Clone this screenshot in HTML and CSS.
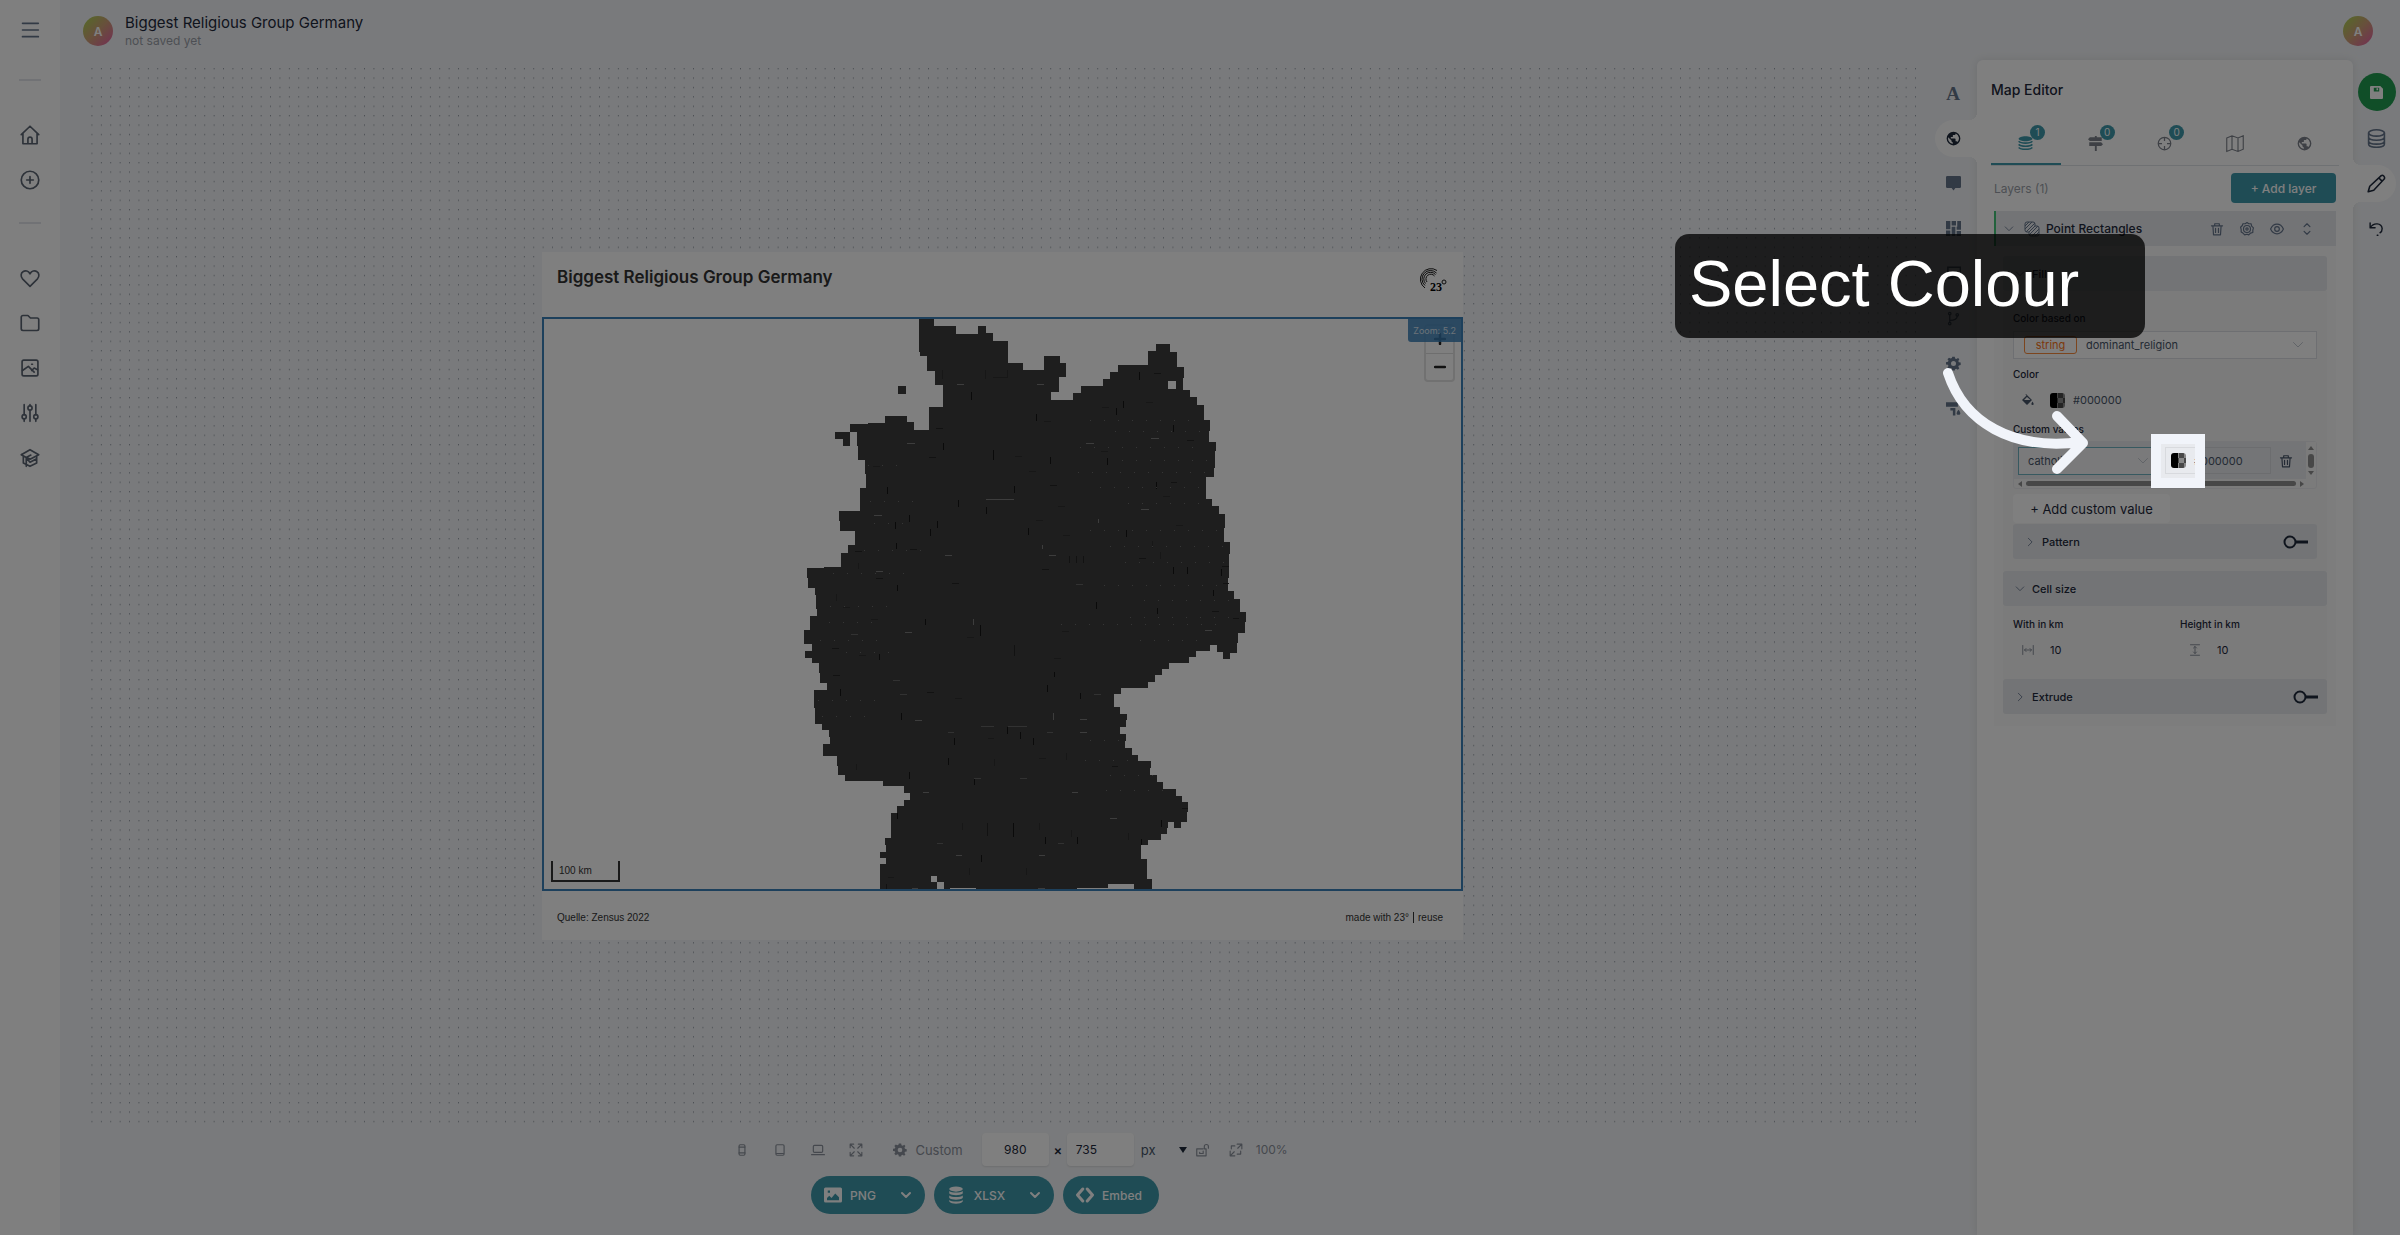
FILE: index.html
```html
<!DOCTYPE html>
<html lang="en">
<head>
  <meta charset="UTF-8" />
  <meta name="viewport" content="width=device-width, initial-scale=1" />
  <title>Biggest Religious Group Germany</title>
  <link rel="stylesheet" href="styles.css">
</head>
<body>
  <!-- Shared icons -->
  <svg class="icon-defs" aria-hidden="true">
    <symbol id="i-globe" viewBox="0 0 24 24"><path fill="currentColor" fill-rule="evenodd" d="M12 1a11 11 0 1 0 0 22 11 11 0 0 0 0-22zM11 20.500c-4.300-.5-7.700-4.200-7.700-8.500 0-.7.100-1.300.2-1.900L8.800 15v1.100c0 1.200 1 2.200 2.200 2.200zm7.500-2.800c-.3-.9-1.100-1.500-2.100-1.500h-1.100v-3.300c0-.6-.5-1.100-1.100-1.100H7.700V9.700h2.200c.6 0 1.100-.5 1.100-1.100V6.400h2.200c1.200 0 2.200-1 2.200-2.200v-.4a8.800 8.800 0 0 1 3.100 13.900z"/></symbol>
    <symbol id="i-gear" viewBox="0 0 24 24"><path fill="currentColor" fill-rule="evenodd" d="M10 1h4l.6 3 2 .9L19.300 3.200l2 2-1.600 2.700.8 2 3 .6v3.900l-3 .6-.8 2 1.600 2.600-2.400 2.300-2.500-1.700-2 .8L14 23h-4l-.6-3-2-.8-2.600 1.700L2.200 18.500 4 16l-.9-2L0 13.700V10l3.200-.7.8-2L2.300 5l2.500-2.400L7.400 4l2-.8zM12 8a4 4 0 1 0 0 8 4 4 0 0 0 0-8z"/></symbol>
    <symbol id="i-trash" viewBox="0 0 24 24"><path d="M2.500 6.500h19M8 6V3h8v3M5 7l1 15h12l1-15M9.500 11v7M14.500 11v7"/></symbol>
    <symbol id="i-down" viewBox="0 0 24 24"><path d="M3 7l9 9 9-9"/></symbol>
    <symbol id="i-right" viewBox="0 0 24 24"><path d="M8 3l9 9-9 9"/></symbol>
    <symbol id="i-drop" viewBox="0 0 24 24"><path d="M4 8l8 8 8-8" stroke-width="4"/></symbol>
    <symbol id="i-toggle" viewBox="0 0 26 14"><circle cx="7" cy="7" r="5.500" fill="none" stroke="currentColor" stroke-width="2"/><path d="M13 7h12" stroke="currentColor" stroke-width="3"/></symbol>
  </svg>

  <div class="app">
    <aside class="sidebar">
      <button class="menu-btn" aria-label="Menu"><svg class="icon" viewBox="0 0 24 24"><path d="M3 4h19M3 12h19M3 20h19"/></svg></button>
      <hr>
      <a href="#" aria-label="Home"><svg class="icon" viewBox="0 0 24 24"><path d="M1.500 11.500L12 1.500l10.500 10M3.500 10v12.500h17V10M9.500 22v-5a2.500 2.500 0 0 1 5 0v5"/></svg></a>
      <a href="#" aria-label="New"><svg class="icon" viewBox="0 0 24 24"><circle cx="12" cy="12" r="10.500"/><path d="M12 8v8M8 12h8"/></svg></a>
      <hr>
      <a href="#" aria-label="Favourites"><svg class="icon" viewBox="0 0 24 24"><path d="M12 22L3 13C.5 10 1 6 3.500 4.500 6.500 2.500 10 3.500 12 7c2-3.500 5.500-4.500 8.500-2.500C23 6 23.500 10 21 13z"/></svg></a>
      <a href="#" aria-label="Folders"><svg class="icon" viewBox="0 0 24 24"><path d="M1.500 19V5a2 2 0 0 1 2-2h6l3 3h8a2 2 0 0 1 2 2v11a2 2 0 0 1-2 2h-17a2 2 0 0 1-2-2z"/></svg></a>
      <a href="#" aria-label="Images"><svg class="icon" viewBox="0 0 24 24"><rect x="2.500" y="2.500" width="19" height="19" rx="2"/><path d="M3 15l7-5 7 7M14 15l3-3 4 2M14 7.500h1"/></svg></a>
      <a href="#" aria-label="Adjustments"><svg class="icon" viewBox="0 0 24 24"><path d="M5 2v12M5 19v3M12 9v13M12 2v1M19 2v12M19 19v3"/><circle cx="5" cy="16.500" r="2.500"/><circle cx="12" cy="6" r="2.500"/><circle cx="19" cy="16.500" r="2.500"/></svg></a>
      <a href="#" aria-label="Academy"><svg class="icon" viewBox="0 0 24 24"><path d="M1.500 8L12 2l10.500 6L12 13.500 8 11l5-2.500M1.500 8l6 3.500V22M4 10v8l8 4 8-4v-8M7.500 12l4.500 5 8-4"/></svg></a>
    </aside>

    <main class="main">
      <header class="topbar">
        <span class="avatar">A</span>
        <div class="doc">
          <h1>Biggest Religious Group Germany</h1>
          <p>not saved yet</p>
        </div>
        <span class="avatar user">A</span>
      </header>

      <div class="workspace">
        <section class="stage">
          <div class="canvas">
            <svg class="dots" aria-hidden="true">
              <defs><pattern id="dot" width="10" height="10" patternUnits="userSpaceOnUse" patternTransform="scale(.94)"><circle cx="9.800" cy="0.800" r=".8" fill="#7f8894"/></pattern></defs>
              <rect width="100%" height="100%" fill="url(#dot)"/>
            </svg>
            <article class="card">
              <div class="card-head">
                <h2>Biggest Religious Group Germany</h2>
                <svg class="logo" viewBox="0 0 30 28" aria-label="23 degrees">
                  <g fill="none" stroke="#1c1c1c" stroke-width="1">
                    <path d="M19 3.500A10.500 10.500 0 1 0 7 21M18.500 6A8.500 8.500 0 1 0 7 18.500M17.500 7.500A6.500 6.500 0 1 0 7.500 16.500M16.500 9A4.500 4.500 0 1 0 9 15"/>
                    <circle cx="26" cy="15" r="2"/>
                  </g>
                  <text x="12" y="24" class="logo-text">23</text>
                </svg>
              </div>
              <div class="map">
                <svg class="land" viewBox="544 319 917 570" aria-label="Map of Germany">
                  <path fill="#3c3c3c" fill-rule="evenodd" d="M919 319H934V326H956V334H978V326H986V333H993V341H1008V363H1023V370H1044V356H1060V363H1066V377H1059V392H1051V400H1073V393H1081V386H1103V379H1110V372H1118V365H1148V351H1156V344H1170V352H1177V367H1184L1183 390H1190V397H1197V405H1204V420H1210L1209 442H1216L1214 477H1206V499H1212V506H1219V514H1225L1224 542H1230L1228 591H1234V599H1240V612H1246L1245 633H1238L1237 653H1230V659H1223V652H1217V645H1210V651H1196V657H1189V663H1169V669H1162V675H1155V682H1148V688H1121V694H1114V707H1120V714H1127L1126 727H1120V734H1126L1125 748H1132V755H1138V761H1151L1150 775H1157V782H1163V789H1176V796H1182V802H1188L1187 822H1181V828H1174V822H1168L1167 834H1161V840H1148V845H1141V859H1147V879H1152V889H1134V884H1108V888H1077V889H976V888H950V889H880V864H886V858H880V852H886L885 838H891V813H897V806H904V800H910V793H904V786H883V781H845V775H838L837 756H823V744H830L829 730H822V724H815L814 690H827V683H820L819 663H812V658H805V651H812V644H804V630H810V616H817L815 588H808L807 568L841 567V553H848V545H855V531H840L839 511H860V488H866L865 460H858L857 432H850V424L885 423V416H907V422H914V430H929V407H943V385H935V371H927V356H920L919 348ZM898 386h8v8h-8ZM835 432h15v14h-7v-7h-8ZM1168 381h8v8h-8ZM931 876h6v6h-6ZM937 882h7v7h-7Z"/>
                  <!-- gaps between grid cells -->
                  <path stroke="#969696" stroke-width="1" opacity=".7" d="M957 384.500h7M907 443.500h8M986 499.500h28M874 515.500h8M945 555.500h7M876 571.500h7M1037 384.500h7M1086 443.500h8M1151 438.500h8M1141 509.500h8M1049 555.500h7M905 632.500h7M1205 630.500h7M915 720.500h7M1080 719.500h7M1080 732.500h7M923 792.500h6M1072 792.500h6M1110 818.500h7M956 855.500h6M1039 855.500h6M912 888.500h6M1038 888.500h7M973.500 619v6M1053.500 713v7M1098.500 519v4M1042.500 545v4"/>
                  <path stroke="#707070" stroke-width="1" opacity=".8" d="M851 634.500h7M893 680.500h7M900 694.500h7M1094 694.500h7M981 726.500h13M1008 726.500h19M948 732.500h6M1047 732.500h6M974 778.500h7M1020 778.500h7M937 843.500h6M1058 843.500h6M1076 584.500h7"/>
                  <path stroke="#141414" stroke-width="1" d="M971.500 392v8M993.500 450v10M943.500 443v7M887.500 487v7M958.500 500v7M909.500 515v7M895.500 522v7M937.500 521v7M930.500 529v7M896.500 543v6M986.500 507v7M1014.500 486v7M1028.500 528v7M1107.500 458v7M1139.500 372v8M1123.500 401v7M1116.500 408v7M1173.500 425v7M1156.500 482v7M1126.500 530v7M1036.500 414v7M1050.500 457v7M1173.500 567v7M1187.500 567v7M1221.500 569v7M1213.500 590v6M897.500 585v6M925.500 619v6M980.500 625v11M1096.500 602v7M1157.500 608v6M879.500 654v6M840.500 689v7M1054.500 672v5M1047.500 685v7M1080.500 693v6M901.500 713v7M954.500 738v7M1007.500 727v7M1020.500 732v7M1033.500 738v7M948.500 758v7M909.500 772v7M974.500 779v6M897.500 813v6M1013.500 823v14M1045.500 837v7M1077.500 837v7M981.500 855v7M1161.500 820v7M1141.500 839v6"/>
                  <path stroke="#242424" stroke-width="1" d="M1083.500 556v7M1076.500 556v7M1069.500 556v7M1014.500 645v11M987.500 823v13M886.500 884v5M936 428.500h7M929 457.500h7M910 549.500h7M1154 373.500h7M1187 440.500h7M1171 482.500h6M1050 485.500h7M1139 558.500h7M1042 569.500h7M855 551.500h7M876 578.500h7M952 583.500h7M1222 566.500h7M1223 583.500h6M1212 611.500h7M1233 618.500h6M832 648.500h7M833 675.500h7M927 692.500h7M1112 766.500h6M1182 808.500h6"/>
                  <path stroke="#2e2e2e" stroke-width="1" d="M985.500 370v9M942.500 370v9M1007.500 370v8M993 377.500h15M873 466.500h7M1015 456.500h7M1029 471.500h7M1102 407.500h7M1146 402.500h7M1044 421.500h7M1101 451.500h7M1163 496.500h7M1176 525.500h7M1058 506.500h7M1036 520.500h7M1063 535.500h7M858.500 563v6M1152.500 541v7M1160.500 552v7M836.500 594v7M843 607.500h7M871 619.500h7M859 655.500h7M1062 631.500h7M1054 658.500h7M967 637.500h7M955 698.500h7M988 738.500h6M1039 758.500h7M1066.500 753v7M994.500 759v7M856.500 764v6M962.500 823v7M1039.500 823v7M1071.500 830v7M1128.500 833v7M969.500 868v7M1026.500 868v7M888 877.500h6"/>
                  <path stroke="#7a7a7a" stroke-width="1" stroke-dasharray="1 13" opacity=".8" d="M1090 420.500h100M1115 431.500h90M1080 447.500h120M1122 460.500h85M1078 472.500h130M1100 487.500h100M1128 503.500h80M1090 530.500h130M1110 546.500h115M1125 562.500h100M1104 585.500h120M1144 600.500h90M1130 617.500h100M1061 624.500h160M1140 640.500h60M830 606.500h60M829 622.500h50M820 640.500h70M868 465.500h40M870 501.500h50M874 523.500h40M864 550.500h60M833 573.500h80M846 652.500h50M818 700.500h60M822 716.500h50M1090 740.500h35M1085 760.500h50M1110 775.500h45M1106 790.500h60"/>
                </svg>
                <div class="zoom-ctl">
                  <button aria-label="Zoom in"><svg class="icon" viewBox="0 0 24 24"><path d="M12 2v20M2 12h20" stroke-width="5"/></svg></button>
                  <button aria-label="Zoom out"><svg class="icon" viewBox="0 0 24 24"><path d="M2 12h20" stroke-width="5"/></svg></button>
                </div>
                <span class="zoom-tag">Zoom: 5.2</span>
                <span class="scale">100 km</span>
              </div>
              <div class="card-foot">
                <span>Quelle: Zensus 2022</span>
                <span class="credit"><a href="#">made with 23°</a><a href="#" class="reuse">reuse</a></span>
              </div>
            </article>
          </div>

          <div class="sizebar">
            <button aria-label="Phone"><svg class="icon" viewBox="0 0 24 24"><rect x="7" y="3" width="10" height="18" rx="2"/><path d="M7 7h10M7 17h10"/></svg></button>
            <button aria-label="Tablet"><svg class="icon" viewBox="0 0 24 24"><rect x="5" y="3" width="14" height="18" rx="2"/><path d="M6 18h12"/></svg></button>
            <button aria-label="Laptop"><svg class="icon" viewBox="0 0 24 24"><rect x="4" y="4" width="16" height="12" rx="2"/><path d="M1 20h22"/></svg></button>
            <button aria-label="Full size"><svg class="icon" viewBox="0 0 24 24"><path d="M2 8V2h6M16 2h6v6M22 16v6h-6M8 22H2v-6M2 2l7 7M22 2l-7 7M22 22l-7-7M2 22l7-7"/></svg></button>
            <button class="custom"><svg class="icon solid"><use href="#i-gear"/></svg>Custom</button>
            <input type="text" class="w" value="980" aria-label="Width">
            <span class="times">×</span>
            <input type="text" class="h" value="735" aria-label="Height">
            <select class="unit" aria-label="Unit"><option>px</option></select>
            <svg class="caret" viewBox="0 0 8 6" aria-hidden="true"><path d="M0 0h8L4 6z" fill="currentColor"/></svg>
            <button aria-label="Lock ratio" class="lock"><svg class="icon" viewBox="0 0 24 24"><path d="M14 10H3v12h16V10h-3V6a3.500 3.500 0 0 1 7 0v3M8 16v2h6v-4"/></svg></button>
            <button class="fit"><svg class="icon" viewBox="0 0 24 24"><path d="M14 2h8v8M22 2l-7 7M10 22H2v-8M2 22l7-7M4 10V5h6M20 14v5h-6"/></svg>100%</button>
          </div>

          <div class="exports">
            <button><svg viewBox="0 0 24 24" class="icon solid"><path fill="currentColor" fill-rule="evenodd" d="M2 2h20a2 2 0 0 1 2 2v16a2 2 0 0 1-2 2H2a2 2 0 0 1-2-2V4a2 2 0 0 1 2-2zm3 4v3h3V6zM4 19h16v-4l-5-5-5 6-3-3-3 3z"/></svg>PNG<svg class="icon chev"><use href="#i-drop"/></svg></button>
            <button><svg viewBox="0 0 24 24" class="icon solid"><g fill="currentColor"><ellipse cx="12" cy="4" rx="9" ry="3.500"/><path d="M3 6.500c3 3 15 3 18 0V10c-3 3-15 3-18 0zM3 12.500c3 3 15 3 18 0V16c-3 3-15 3-18 0zM3 18.500c3 3 15 3 18 0v2c-3 4-15 4-18 0z"/></g></svg><span class="grow">XLSX</span><svg class="icon chev"><use href="#i-drop"/></svg></button>
            <button class="embed"><svg viewBox="0 0 24 24" class="icon"><path d="M9 4L2 12l7 8M15 4l7 8-7 8" stroke-width="4"/></svg>Embed</button>
          </div>
        </section>

        <nav class="rail">
          <a href="#" class="letter" aria-label="Text">A</a>
          <a href="#" class="active" aria-label="Map"><svg><use href="#i-globe"/></svg></a>
          <a href="#" aria-label="Tooltip"><svg viewBox="0 0 24 24"><path fill="currentColor" d="M2 0h20a2 2 0 0 1 2 2v15a2 2 0 0 1-2 2h-7l-3 4-3-4H2a2 2 0 0 1-2-2V2a2 2 0 0 1 2-2z"/></svg></a>
          <a href="#" aria-label="Layout"><svg viewBox="0 0 24 24"><path fill="currentColor" d="M0 0h7v13H0zM0 15h7v9H0zM9 0h7v7H9zM18 0h6v14h-7V9h1zM9 9h6v15H9zM17 16h7v8h-7z"/></svg></a>
          <a href="#" aria-label="Frame"><svg viewBox="0 0 24 24"><rect x="3" y="2" width="20" height="16" fill="none" stroke="currentColor" stroke-width="2.500"/><path d="M3 18h9" stroke="currentColor" stroke-width="5"/></svg></a>
          <a href="#" aria-label="Branch"><svg viewBox="0 0 24 24" class="icon"><circle cx="6" cy="4" r="2"/><circle cx="18" cy="6" r="2"/><circle cx="6" cy="20" r="2"/><path d="M6 6v12M6 15c8 0 12-2 12-7"/></svg></a>
          <a href="#" aria-label="Settings"><svg><use href="#i-gear"/></svg></a>
          <a href="#" aria-label="Theme"><svg viewBox="0 0 24 24"><path fill="currentColor" d="M0 2h19v7H0zM7 11h8v12h-4v-8H7zM20 14c4 5 4 8 0 8s-4-3 0-8z"/></svg></a>
        </nav>

        <section class="panel">
          <h2>Map Editor</h2>
          <nav class="tabs">
            <a href="#" class="active"><svg viewBox="0 0 24 24"><path fill="currentColor" d="M12 2c6 0 11 2 11 4s-5 4-11 4S1 8 1 6s5-4 11-4z"/><path fill="none" stroke="currentColor" stroke-width="2.500" d="M1 10c4 4 18 4 22 0M1 15c4 4 18 4 22 0M1 20c4 4 18 4 22 0"/></svg><span class="badge">1</span></a>
            <a href="#"><svg viewBox="0 0 24 24"><path fill="currentColor" d="M11 0h3v2h8v6H3L0 5l3-3h8zM2 10h19l3 3-3 3h-7v8h-3v-8H2z"/></svg><span class="badge">0</span></a>
            <a href="#"><svg viewBox="0 0 24 24"><g fill="none" stroke="currentColor" stroke-width="2"><circle cx="12" cy="12" r="10"/><path d="M12 2v6M12 16v6M2 12h6M16 12h6"/></g></svg><span class="badge">0</span></a>
            <a href="#"><svg class="wide" viewBox="0 0 24 24"><path fill="none" stroke="currentColor" stroke-width="1.500" d="M1 4l7-3 8 3 7-3v18l-7 3-8-3-7 3zM8 1v18M16 4v18"/></svg></a>
            <a href="#"><svg><use href="#i-globe"/></svg></a>
          </nav>
          <div class="layers-head">
            <span>Layers (1)</span>
            <button class="add">+ Add layer</button>
          </div>

          <div class="layer">
            <div class="layer-row">
              <svg class="icon chev"><use href="#i-down"/></svg>
              <svg class="kind" viewBox="0 0 16 16"><path d="M1 3a2 2 0 0 1 2-2h6a2 2 0 0 1 2 2v2h2a2 2 0 0 1 2 2v6a2 2 0 0 1-2 2H7a2 2 0 0 1-2-2v-2H3a2 2 0 0 1-2-2z" fill="none" stroke="currentColor"/><path d="M1 5l4-4M1 8l7-7M2 11l9-9M5 11l6-6M5 14l9-9M8 15l7-7M11 15l4-4" stroke="currentColor"/></svg>
              <strong>Point Rectangles</strong>
              <button aria-label="Delete layer"><svg class="icon"><use href="#i-trash"/></svg></button>
              <button aria-label="Layer settings"><svg class="icon" viewBox="0 0 24 24"><path d="M12 1l3 2 4 0 1 4 3 3-1 4 0 4-4 1-3 3-3-1-4 1-3-3-3-2 0-4-1-4 3-3 1-3 4 0z"/><circle cx="12" cy="12" r="6"/><circle cx="12" cy="12" r="2"/></svg></button>
              <button aria-label="Toggle layer"><svg class="icon" viewBox="0 0 24 24"><path d="M1 12c5-11 17-11 22 0-5 11-17 11-22 0z"/><circle cx="12" cy="12" r="4"/></svg></button>
              <button aria-label="Move layer"><svg class="icon" viewBox="0 0 24 24"><path d="M7 8l5-5 5 5M7 16l5 5 5-5"/></svg></button>
            </div>
            <div class="layer-body">
              <h3 class="group"><svg class="icon"><use href="#i-down"/></svg>Fill</h3>
              <div class="group-body fill">
                <label class="cap first" for="based">Color based on</label>
                <div class="picker">
                  <span class="type">string</span>
                  <select id="based"><option>dominant_religion</option></select>
                  <svg class="icon"><use href="#i-down"/></svg>
                </div>
                <label class="cap" for="color">Color</label>
                <div class="color-row">
                  <svg class="bucket" viewBox="0 0 24 24"><path fill="currentColor" fill-rule="evenodd" d="M8 0l12 12-10 10L0 12 9 3 7 1zM10 6l-6 6h13zM21 15c3 4 3 7 0 7s-3-3 0-7z"/></svg>
                  <span class="swatch"></span>
                  <input id="color" type="text" value="#000000">
                </div>
                <label class="cap" for="custom">Custom values</label>
                <div class="values">
                  <div class="values-row">
                    <div class="value-select">
                      <select id="custom"><option>catholic</option></select>
                      <svg class="icon"><use href="#i-down"/></svg>
                    </div>
                    <div class="value-color">
                      <span class="swatch"></span>
                      <input type="text" value="#000000" aria-label="Value colour">
                    </div>
                    <button aria-label="Remove value"><svg class="icon"><use href="#i-trash"/></svg></button>
                    <div class="vbar"><i class="up"></i><b></b><i class="down"></i></div>
                  </div>
                  <div class="hbar"><i class="left"></i><b></b><i class="right"></i></div>
                </div>
                <button class="add-value">+ Add custom value</button>
                <h3 class="group"><svg class="icon"><use href="#i-right"/></svg>Pattern<button class="toggle" aria-label="Pattern on or off"><svg><use href="#i-toggle"/></svg></button></h3>
              </div>
              <h3 class="group"><svg class="icon"><use href="#i-down"/></svg>Cell size</h3>
              <div class="group-body cells">
                <div>
                  <label class="cap" for="cw">With in km</label>
                  <div class="num"><svg class="icon" viewBox="0 0 24 24"><path d="M1.500 3v18M22.500 3v18M5 12h14M8 9l-3 3 3 3M16 9l3 3-3 3"/></svg><input id="cw" type="text" value="10"></div>
                </div>
                <div>
                  <label class="cap" for="ch">Height in km</label>
                  <div class="num"><svg class="icon" viewBox="0 0 24 24"><path d="M3 1.500h18M3 22.500h18M12 5v14M9 8l3-3 3 3M9 16l3 3 3-3"/></svg><input id="ch" type="text" value="10"></div>
                </div>
              </div>
              <h3 class="group"><svg class="icon"><use href="#i-right"/></svg>Extrude<button class="toggle" aria-label="Extrude on or off"><svg><use href="#i-toggle"/></svg></button></h3>
            </div>
          </div>
        </section>

        <nav class="modes">
          <button class="save" aria-label="Save"><svg viewBox="0 0 24 24"><path fill="currentColor" fill-rule="evenodd" d="M2 0h17l5 5v17a2 2 0 0 1-2 2H2a2 2 0 0 1-2-2V2a2 2 0 0 1 2-2zm5 3v7h10V3zM12 4h3v4h-3z"/></svg></button>
          <a href="#" aria-label="Data"><svg class="icon" viewBox="0 0 24 24"><ellipse cx="12" cy="5" rx="10" ry="4"/><path d="M2 5v14c0 5.500 20 5.500 20 0V5M2 10c0 5.500 20 5.500 20 0M2 15c0 5.500 20 5.500 20 0"/></svg></a>
          <a href="#" class="active" aria-label="Edit"><svg class="icon" viewBox="0 0 24 24"><path d="M1.500 22.500l2-7L18 2c2-1.500 5 1.500 4 4L8.500 20.500zM15 5l4 4"/></svg></a>
          <a href="#" class="undo" aria-label="Undo"><svg class="icon" viewBox="0 0 24 24"><path d="M3 4v7h7M3 11c5-8 16-7 17 1 0 3-1 5-3 6M13 21.500h1"/></svg></a>
        </nav>
      </div>
    </main>
  </div>

  <!-- Guided tour step -->
  <div class="tour">
    <div class="spotlight"></div>
    <div class="callout">Select Colour</div>
    <svg class="arrow" viewBox="0 0 150 120" aria-hidden="true"><path d="M8 13C24 62 72 91 141 82M117 56L143 83L117 109"/></svg>
  </div>
</body>
</html>
```
FILE: styles.css
```css
* {
  margin: 0;
  padding: 0;
  box-sizing: border-box;
}

body {
  font-family: Inter, sans-serif;
  font-size: 12px;
  color: #1e293b;
  background: #f3f5f8;
}

a {
  color: inherit;
  text-decoration: none;
}

button, input, select {
  font: inherit;
  color: inherit;
  border: 0;
  background: none;
}

select {
  appearance: none;
}

.icon-defs {
  display: none;
}

.icon {
  width: 14px;
  height: 14px;
  fill: none;
  stroke: currentColor;
  stroke-width: 2;
  stroke-linecap: round;
  stroke-linejoin: round;
  flex: none;
}

.icon.solid {
  stroke: none;
}

.app {
  display: flex;
  min-height: 100vh;
}

/* Sidebar */
.sidebar {
  width: 60px;
  flex: none;
  background: #fff;
  display: flex;
  flex-direction: column;
  align-items: center;
  color: #5b6472;
}

.sidebar a, .menu-btn {
  height: 45px;
  display: flex;
  align-items: center;
}

.sidebar .menu-btn {
  height: 59px;
  color: #64748b;
}

.sidebar .icon {
  width: 20px;
  height: 20px;
}

.sidebar hr {
  width: 22px;
  height: 2px;
  border: 0;
  background: #e2e4ea;
  margin: 20px 0 31px;
}

/* Top bar */
.main {
  flex: 1;
  min-width: 0;
  display: flex;
  flex-direction: column;
}

.topbar {
  height: 60px;
  padding: 2px 27px 0 23px;
  display: flex;
  align-items: center;
  gap: 12px;
}

.avatar {
  width: 30px;
  height: 30px;
  border-radius: 50%;
  background: linear-gradient(135deg, #a8d84e, #d0a078 50%, #e85ca8);
  color: #fff;
  font-weight: 600;
  display: flex;
  align-items: center;
  justify-content: center;
}

.avatar.user {
  margin-left: auto;
}

.doc h1 {
  font-size: 15px;
  line-height: 20px;
  font-weight: 400;
}

.doc p {
  line-height: 16px;
  color: #9a9fa8;
}

/* Stage */
.workspace {
  flex: 1;
  display: flex;
}

.stage {
  flex: 1;
  min-width: 0;
  padding: 8px 13px 21px 23px;
  display: flex;
  flex-direction: column;
}

.canvas {
  flex: 1;
  position: relative;
  display: flex;
  align-items: center;
  justify-content: center;
}

.dots {
  position: absolute;
  inset: 0;
  width: 100%;
  height: 100%;
}

.card {
  position: relative;
  width: 921px;
  background: #fff;
  font-size: 10px;
  color: #333;
}

.card-head {
  height: 65px;
  padding: 15px 15px;
  display: flex;
  justify-content: space-between;
}

.card-head h2 {
  font-size: 17px;
  line-height: 20px;
  font-weight: 600;
}

.logo {
  width: 30px;
  height: 28px;
}

.logo-text {
  font: bold 12px "Liberation Serif", serif;
}

.map {
  position: relative;
  border: 2px solid #3a80b8;
}

.land {
  display: block;
  width: 100%;
  shape-rendering: crispEdges;
}

.zoom-tag {
  position: absolute;
  top: 0;
  right: 0;
  height: 23px;
  padding: 0 5px;
  font-size: 9px;
  line-height: 23px;
  color: #d6e4f0;
  background: rgba(58, 128, 184, .85);
  border-radius: 0 0 0 3px;
}

.zoom-ctl {
  position: absolute;
  top: 5px;
  right: 6px;
  width: 31px;
  border: 2px solid #e2e2e2;
  border-radius: 4px;
  color: #222;
}

.zoom-ctl button {
  width: 100%;
  height: 27px;
  display: flex;
  align-items: center;
  justify-content: center;
}

.zoom-ctl button + button {
  border-top: 1px solid #ddd;
}

.zoom-ctl .icon {
  width: 12px;
  height: 12px;
}

.scale {
  position: absolute;
  left: 7px;
  bottom: 7px;
  width: 69px;
  height: 21px;
  padding-left: 6px;
  line-height: 19px;
  border: 2px solid #333;
  border-top: 0;
  font-family: "Liberation Sans", sans-serif;
}

.card-foot {
  height: 49px;
  padding: 4px 20px 0 15px;
  display: flex;
  justify-content: space-between;
  align-items: center;
  font-family: "Liberation Sans", sans-serif;
}

.reuse {
  border-left: 1px solid #333;
  margin-left: 4px;
  padding-left: 4px;
}

.sizebar {
  margin-top: 10px;
  height: 33px;
  padding-left: 18px;
  display: flex;
  align-items: center;
  justify-content: center;
  font-size: 13px;
  color: #8b919c;
}

.sizebar button {
  margin-right: 24px;
  display: flex;
  align-items: center;
  gap: 8px;
}

.sizebar .custom {
  margin: 0 19px 0 6px;
}

.sizebar input {
  width: 67px;
  height: 33px;
  border-radius: 4px;
  background: #fff;
  color: #1e293b;
  font-size: 12px;
  box-shadow: 0 1px 2px rgba(0, 0, 0, .1);
}

.sizebar .w {
  text-align: center;
}

.sizebar .h {
  padding-left: 9px;
}

.times {
  width: 18px;
  text-align: center;
  color: #1e293b;
  font-weight: 600;
}

.unit {
  width: 32px;
  margin: 0 6px 0 7px;
  color: #475569;
}

.caret {
  width: 8px;
  height: 6px;
  margin-right: 8px;
  color: #1e293b;
}

.sizebar .fit {
  margin: 0;
  font-size: 12px;
  gap: 13px;
}

.sizebar .lock {
  margin-right: 20px;
}

.exports {
  margin-top: 10px;
  padding-right: 35px;
  display: flex;
  justify-content: center;
  gap: 9px;
}

.exports button {
  height: 38px;
  padding: 0 13px;
  border-radius: 19px;
  background: #3e99ab;
  color: #fff;
  display: flex;
  align-items: center;
  gap: 8px;
  font-weight: 500;
}

.exports .icon {
  width: 18px;
  height: 18px;
}

.exports .chev {
  width: 12px;
  height: 12px;
  margin-left: 16px;
}

.exports .embed {
  padding: 0 17px 0 13px;
}

.exports .grow {
  padding-left: 1px;
}

/* Rails left and right of the editor panel */
.rail {
  width: 42px;
  padding-top: 11px;
  flex: none;
  color: #64748b;
}

.rail a {
  height: 45px;
  padding-right: 6px;
  display: flex;
  align-items: center;
  justify-content: center;
}

.rail svg {
  width: 15px;
  height: 15px;
}

.rail .letter {
  font: bold 19px "Liberation Serif", serif;
}

.rail .active, .modes .active {
  position: relative;
  height: 37px;
  margin: 4px 0;
  background: #fff;
  border-radius: 19px 0 0 19px;
  color: #1e293b;
}

.modes .active {
  border-radius: 0 19px 19px 0;
  margin-right: 4px;
  padding-left: 4px;
}

/* Inward curves where the active tab meets the panel */
.active::before, .active::after {
  position: absolute;
  width: 8px;
  height: 8px;
}

.rail .active::before, .rail .active::after, .modes .active::before, .modes .active::after {
  content: "";
}

.rail .active::before {
  right: 0;
  top: -8px;
  background: radial-gradient(circle at 0 0, transparent 8px, #fff 8px);
}

.rail .active::after {
  right: 0;
  bottom: -8px;
  background: radial-gradient(circle at 0 100%, transparent 8px, #fff 8px);
}

.modes .active::before {
  left: 0;
  top: -8px;
  background: radial-gradient(circle at 100% 0, transparent 8px, #fff 8px);
}

.modes .active::after {
  left: 0;
  bottom: -8px;
  background: radial-gradient(circle at 100% 100%, transparent 8px, #fff 8px);
}

.panel {
  width: 376px;
  flex: none;
  padding: 20px 14px 0;
  background: #fff;
  border-radius: 6px 6px 0 0;
  box-shadow: 0 0 10px rgba(0, 0, 0, .1);
}

.modes {
  width: 47px;
  padding-top: 13px;
  flex: none;
  color: #64748b;
}

.modes a {
  height: 45px;
  display: flex;
  align-items: center;
  justify-content: center;
}

.modes .icon {
  width: 19px;
  height: 19px;
}

.modes .undo {
  color: #1e293b;
}

.modes .undo .icon {
  width: 17px;
  height: 17px;
}

.save {
  display: flex;
  align-items: center;
  justify-content: center;
  width: 38px;
  height: 38px;
  margin: 0 auto 5px;
  border-radius: 50%;
  background: #209c50;
  color: #fff;
}

.save svg {
  width: 13px;
  height: 13px;
}

/* Editor panel */
.panel h2 {
  font-size: 14px;
  line-height: 20px;
  font-weight: 500;
}

.tabs {
  margin-top: 20px;
  height: 46px;
  display: flex;
  border-bottom: 1px solid #dfe2e7;
  color: #7c818a;
}

.tabs a {
  position: relative;
  flex: 1;
  display: flex;
  align-items: center;
  justify-content: center;
  padding-top: 2px;
}

.tabs a.active {
  color: #3e99ab;
  border-bottom: 2px solid #3e99ab;
}

.tabs svg {
  width: 15px;
  height: 15px;
}

.tabs .wide {
  width: 18px;
  height: 18px;
}

.badge {
  position: absolute;
  top: 5px;
  left: 39px;
  width: 15px;
  height: 15px;
  border-radius: 50%;
  background: #3e99ab;
  color: #fff;
  font-size: 10px;
  line-height: 15px;
  text-align: center;
}

.layers-head {
  margin: 7px 3px 8px;
  display: flex;
  justify-content: space-between;
  align-items: center;
  color: #9a9fa8;
}

.add {
  width: 105px;
  height: 30px;
  border-radius: 4px;
  background: #3e99ab;
  color: #fff;
  font-weight: 500;
}

.layer {
  margin: 0 3px;
  background: #fafafa;
}

.layer-row {
  height: 35px;
  padding: 0 22px 0 8px;
  border-left: 2px solid #45c478;
  background: #e6e8ec;
  display: flex;
  align-items: center;
  gap: 16px;
  color: #64748b;
}

.layer-row .icon {
  display: block;
}

.layer-row .chev {
  width: 10px;
  height: 10px;
}

.layer-row strong {
  flex: 1;
  margin-left: -10px;
  color: #1e293b;
  font-weight: 500;
}

.kind {
  width: 16px;
  height: 16px;
  margin-left: -6px;
}

.layer-body {
  padding: 10px 9px 12px;
}

.group {
  height: 35px;
  padding: 0 8px 0 12px;
  display: flex;
  align-items: center;
  gap: 7px;
  background: #e6e8ec;
  border-radius: 3px;
  font-size: 11px;
  font-weight: 500;
}

.group .icon {
  width: 10px;
  height: 10px;
  color: #64748b;
}

.toggle {
  margin-left: auto;
  height: 14px;
}

.toggle svg {
  width: 26px;
  height: 14px;
  display: block;
}

.group-body {
  padding: 0 10px;
  background: #f6f6f6;
}

.fill {
  padding-bottom: 12px;
}

.cap {
  display: block;
  margin: 7px 0 4px;
  font-size: 10px;
  line-height: 16px;
  font-weight: 500;
}

.fill .first {
  margin: 0 0 5px;
  padding-top: 19px;
  line-height: 16px;
}

.picker {
  height: 28px;
  padding: 0 12px 0 10px;
  border: 1px solid #dcdfe4;
  background: #fff;
  display: flex;
  align-items: center;
  gap: 9px;
  font-size: 11px;
  color: #475569;
}

.picker select {
  flex: 1;
}

.picker .icon, .value-select .icon {
  width: 12px;
  height: 12px;
  color: #c3c8d0;
}

.type {
  width: 53px;
  height: 18px;
  border: 1px solid #f98b3c;
  border-radius: 3px;
  color: #f97316;
  line-height: 16px;
  text-align: center;
}

.color-row {
  height: 28px;
  padding-left: 9px;
  display: flex;
  align-items: center;
  font-size: 11px;
  color: #475569;
}

.color-row input {
  width: 80px;
}

.bucket {
  width: 12px;
  height: 12px;
  margin-right: 16px;
}

.swatch {
  width: 15px;
  height: 15px;
  margin-right: 8px;
  border-radius: 3px;
  flex: none;
  background:
    linear-gradient(90deg, #000 50%, transparent 50%),
    repeating-conic-gradient(#484848 0 25%, #888 0 50%) 8px 5px / 10px 10px;
}

.values {
  height: 48px;
  border: 1px solid #ebebee;
  border-radius: 3px;
}

.values-row {
  height: 37px;
  padding-left: 4px;
  display: flex;
  align-items: center;
  background: #e8eaee;
  font-size: 11px;
  color: #475569;
}

.value-select {
  width: 140px;
  height: 28px;
  margin-right: 7px;
  padding: 0 8px 0 9px;
  border: 1px solid #6fb3c0;
  background: #f4f4f6;
  display: flex;
  align-items: center;
}

.value-select select {
  flex: 1;
}

.value-color {
  width: 106px;
  height: 27px;
  padding-left: 5px;
  border: 1px solid #d8dade;
  display: flex;
  align-items: center;
}

.value-color input {
  width: 70px;
}

.values-row button {
  flex: 1;
  height: 14px;
  padding-right: 5px;
}

.vbar {
  width: 10px;
  height: 37px;
  padding: 4px 0;
  background: #f6f6f6;
  display: flex;
  flex-direction: column;
  align-items: center;
  justify-content: space-between;
}

.vbar b {
  width: 6px;
  height: 14px;
  border-radius: 3px;
  background: #8f8f8f;
}

.hbar {
  height: 9px;
  padding: 0 12px 0 4px;
  display: flex;
  align-items: center;
  justify-content: space-between;
}

.hbar b {
  flex: 1;
  height: 5px;
  margin: 0 4px;
  border-radius: 3px;
  background: #8f8f8f;
}

.values i {
  border: 3px solid transparent;
}

.values .up {
  border-top: 0;
  border-bottom: 4px solid #8f8f8f;
}

.values .down {
  border-bottom: 0;
  border-top: 4px solid #8f8f8f;
}

.values .left {
  border-left: 0;
  border-right: 4px solid #8f8f8f;
}

.values .right {
  border-right: 0;
  border-left: 4px solid #8f8f8f;
}

.add-value {
  display: block;
  width: 157px;
  height: 29px;
  margin: 5px 0 1px;
  border-radius: 4px;
  background: #fff;
  font-size: 13px;
}

.cells {
  padding-top: 3px;
  padding-bottom: 15px;
  display: grid;
  grid-template-columns: 167px 1fr;
}

.num {
  height: 28px;
  padding-left: 9px;
  display: flex;
  align-items: center;
  gap: 16px;
  font-size: 11px;
}

.num .icon {
  width: 12px;
  height: 12px;
  color: #8b919c;
}

.num input {
  width: 60px;
}

/* Guided tour */
.tour {
  position: fixed;
  inset: 0;
  overflow: hidden;
  z-index: 10;
}

.spotlight {
  position: absolute;
  top: 444px;
  right: 205px;
  width: 34px;
  height: 34px;
  box-shadow: 0 0 0 10px #f1f4fa, 0 0 0 3000px rgba(0, 0, 0, .5);
}

.callout {
  position: absolute;
  top: 234px;
  right: 255px;
  width: 470px;
  height: 104px;
  padding-left: 14px;
  border-radius: 14px;
  background: rgba(0, 0, 0, .76);
  color: #fff;
  font-family: "Liberation Sans", sans-serif;
  font-size: 65px;
  line-height: 100px;
}

.arrow {
  position: absolute;
  top: 360px;
  right: 310px;
  width: 150px;
  height: 120px;
  fill: none;
  stroke: #f1f4fa;
  stroke-width: 10px;
  stroke-linecap: round;
  stroke-linejoin: round;
}
```
